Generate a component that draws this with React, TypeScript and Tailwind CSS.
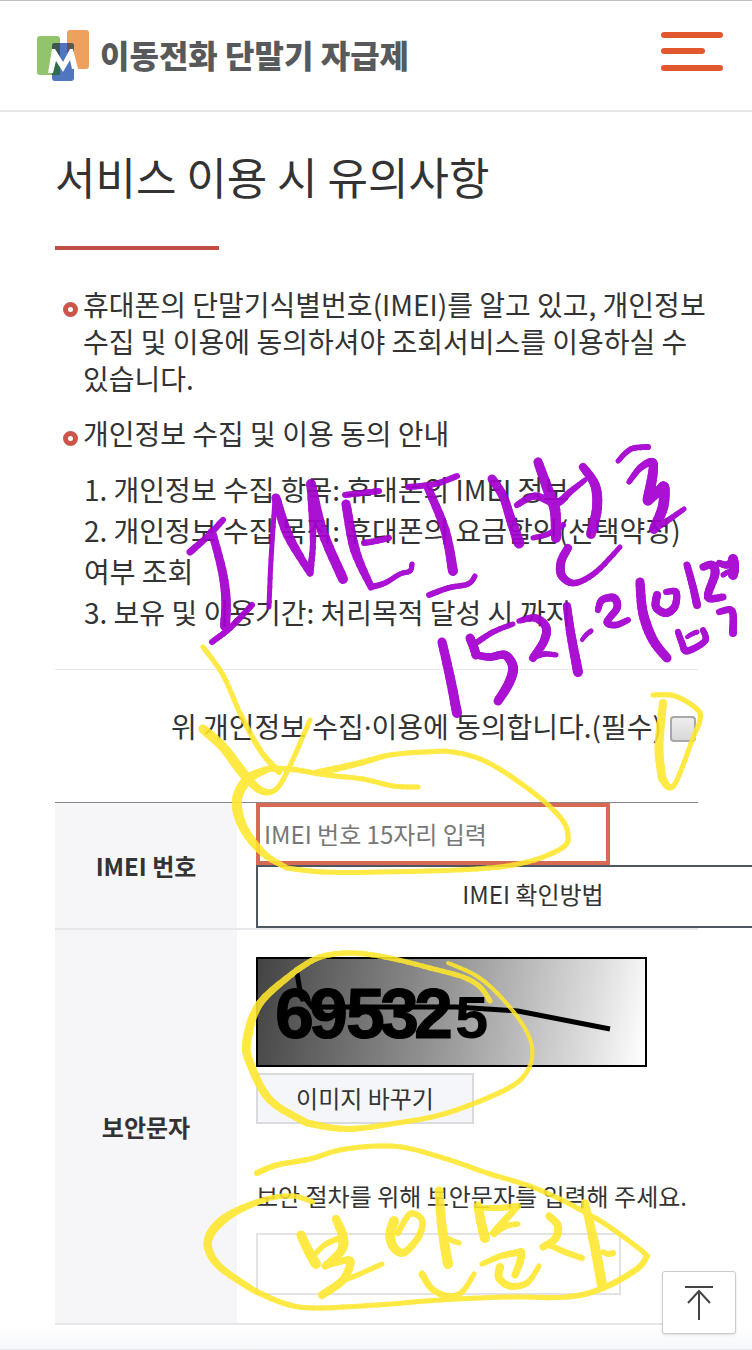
type Stroke = { w: number[]; p: number[] };

const purple: Stroke[] = [
  { w: [7, 6], p: [190, 552, 208, 536, 223, 520] },
  { w: [8, 9, 10], p: [212, 532, 222, 570, 226, 600, 225, 626] },
  { w: [6, 6], p: [212, 642, 230, 628, 252, 605] },
  { w: [5, 5], p: [269, 607, 271, 560, 275, 500] },
  { w: [9, 10, 7], p: [276, 498, 288, 535, 310, 573] },
  { w: [7, 6, 9], p: [310, 573, 313, 540, 311, 484] },
  { w: [10, 10], p: [311, 484, 322, 530, 343, 579] },
  { w: [6, 6], p: [345, 495, 362, 493, 379, 491] },
  { w: [9, 10, 7], p: [346, 504, 355, 550, 371, 587] },
  { w: [6, 5, 5], p: [371, 587, 385, 583, 400, 574, 410, 571, 412, 564] },
  { w: [6, 6], p: [364, 543, 376, 541, 389, 538] },
  { w: [6, 6], p: [408, 487, 435, 484, 457, 476] },
  { w: [8, 9, 10], p: [428, 488, 445, 530, 453, 571] },
  { w: [6, 5], p: [429, 595, 448, 588, 468, 584, 475, 576] },
  { w: [9, 9, 11], p: [492, 479, 503, 496, 511, 520, 519, 543] },
  { w: [9, 11, 10], p: [538, 462, 548, 490, 555, 510, 556, 538] },
  { w: [6, 8, 5], p: [517, 505, 535, 496, 556, 503, 570, 492, 585, 480] },
  { w: [5, 6], p: [533, 538, 548, 534, 563, 525] },
  { w: [8, 10, 10], p: [583, 467, 595, 485, 597, 508, 591, 534] },
  { w: [8, 9, 6, 5], p: [568, 548, 561, 562, 562, 576, 575, 583, 596, 572, 620, 547] },
  { w: [5, 6], p: [618, 461, 631, 449, 648, 447] },
  { w: [5, 8, 11], p: [629, 482, 640, 468, 652, 462, 653, 472, 648, 500] },
  { w: [9, 11, 10], p: [648, 501, 660, 490, 664, 488, 663, 507, 654, 529] },
  { w: [7, 5], p: [654, 529, 667, 521, 684, 509] },
  { w: [9, 10], p: [442, 642, 450, 677, 457, 713] },
  { w: [5, 6], p: [513, 624, 493, 632, 476, 643] },
  { w: [9, 9], p: [470, 638, 474, 648, 476, 655] },
  { w: [7, 8, 10, 9], p: [476, 655, 490, 657, 505, 655, 513, 667, 509, 683, 498, 701] },
  { w: [5, 8, 9, 8], p: [519, 621, 535, 618, 546, 627, 544, 641, 533, 658] },
  { w: [6, 5], p: [533, 657, 545, 654, 556, 655] },
  { w: [8, 10], p: [567, 606, 571, 635, 578, 672] },
  { w: [4, 5], p: [582, 640, 586, 635, 591, 631] },
  { w: [6, 8, 7, 6], p: [598, 610, 602, 600, 614, 598, 617, 608, 607, 622, 616, 625, 628, 620] },
  { w: [9, 10, 9], p: [640, 582, 643, 613, 653, 640, 667, 658] },
  { w: [8, 8, 6], p: [657, 595, 656, 607, 666, 613, 675, 606, 676, 592, 666, 592] },
  { w: [7, 8], p: [687, 565, 693, 587, 697, 605] },
  { w: [6, 7, 6], p: [678, 632, 682, 643, 687, 651, 705, 641, 703, 630] },
  { w: [4, 5], p: [687, 637, 692, 634, 697, 632] },
  { w: [7, 9, 7], p: [703, 567, 712, 565, 715, 574, 708, 597, 723, 597] },
  { w: [6, 8], p: [719, 563, 727, 565, 734, 560] },
  { w: [10, 10], p: [733, 559, 734, 567, 733, 575] },
  { w: [5, 5], p: [723, 575, 728, 572, 735, 570] },
  { w: [6, 8], p: [719, 612, 732, 611, 733, 633] },
];

const yellow: Stroke[] = [
  { w: [5, 5, 6], p: [203, 647, 223, 675, 240, 713, 260, 750, 279, 772] },
  { w: [9, 10, 5, 5], p: [203, 729, 223, 747, 243, 773, 260, 790, 275, 790, 288, 770, 310, 720] },
  { w: [5, 5, 5, 6], p: [418, 787, 393, 786, 363, 779, 327, 775, 290, 769, 268, 769] },
  { w: [6, 10, 10, 8, 5], p: [268, 769, 248, 779, 237, 800, 243, 827, 263, 853, 287, 868] },
  {
    w: [5, 5, 5, 5, 5, 5, 5, 7],
    p: [287, 868, 323, 872, 380, 872, 477, 869, 527, 862, 562, 848, 568, 835, 560, 817, 530, 790, 487, 762, 453, 752, 425, 752, 390, 755, 360, 763, 317, 773],
  },
  { w: [5, 5, 5, 5, 8], p: [653, 695, 675, 696, 697, 709, 700, 720, 693, 738, 677, 780, 669, 787, 662, 778] },
  { w: [8, 9, 8], p: [662, 778, 659, 747, 663, 703] },
  {
    w: [4, 4, 4, 5, 5, 7],
    p: [448, 963, 475, 975, 497, 993, 521, 1022, 532, 1047, 528, 1070, 507, 1089, 447, 1113, 397, 1123, 347, 1129, 307, 1123],
  },
  { w: [7, 8, 9, 6], p: [307, 1123, 270, 1100, 250, 1063, 247, 1040, 260, 1003, 297, 970] },
  { w: [6, 5, 5], p: [297, 970, 320, 957, 350, 953, 385, 957, 430, 968, 463, 977, 480, 987, 490, 1001] },
  {
    w: [6, 5, 5, 5, 5],
    p: [257, 1173, 277, 1165, 310, 1159, 340, 1150, 377, 1146, 407, 1148, 450, 1160, 487, 1173, 540, 1190, 597, 1219, 637, 1247, 647, 1256],
  },
  {
    w: [6, 6, 5, 5, 5, 6],
    p: [647, 1256, 637, 1269, 603, 1288, 567, 1297, 507, 1297, 440, 1300, 377, 1305, 313, 1308, 283, 1303, 253, 1290],
  },
  { w: [6, 8, 9, 5, 5], p: [253, 1290, 220, 1267, 208, 1247, 213, 1230, 233, 1213, 267, 1199, 293, 1196, 313, 1202] },
  { w: [9, 10], p: [301, 1235, 308, 1250, 316, 1264] },
  { w: [5, 6], p: [315, 1254, 326, 1244, 340, 1238] },
  { w: [8, 10, 7], p: [336, 1219, 343, 1237, 341, 1251, 325, 1266] },
  { w: [6, 8, 8], p: [325, 1266, 347, 1260, 350, 1265, 342, 1281, 322, 1295] },
  { w: [5, 5], p: [345, 1280, 362, 1273, 382, 1264] },
  { w: [10, 9, 7, 6, 6], p: [394, 1221, 390, 1236, 395, 1249, 405, 1252, 419, 1236, 422, 1220, 410, 1214, 398, 1233] },
  { w: [9, 10], p: [439, 1191, 442, 1227, 448, 1264] },
  { w: [5, 5], p: [447, 1238, 453, 1241, 459, 1243] },
  { w: [7, 6, 5], p: [422, 1274, 432, 1289, 448, 1296, 462, 1292, 474, 1274] },
  { w: [9, 10], p: [478, 1206, 481, 1222, 485, 1238] },
  { w: [6, 6], p: [480, 1208, 499, 1208, 518, 1206] },
  { w: [6, 8], p: [518, 1206, 505, 1220, 494, 1233] },
  { w: [7, 5], p: [494, 1233, 506, 1226, 518, 1224] },
  { w: [5, 7], p: [482, 1264, 501, 1256, 521, 1252] },
  { w: [8, 7], p: [521, 1252, 520, 1262, 515, 1275] },
  { w: [8, 7, 5], p: [500, 1267, 499, 1278, 510, 1286, 527, 1283, 539, 1266] },
  { w: [7, 8, 7], p: [549, 1216, 558, 1226, 555, 1239, 543, 1247] },
  { w: [6, 6], p: [547, 1244, 565, 1252, 582, 1258] },
  { w: [7, 10, 10], p: [585, 1203, 595, 1247, 602, 1285] },
  { w: [5, 6], p: [603, 1252, 608, 1254, 613, 1253] },
];

type Seg = { d: string; w: number };

/* Splits a freehand stroke into short smooth pieces whose width changes along the way. */
function segments({ w, p }: Stroke): Seg[] {
  const n = p.length / 2;
  const pt = (i: number) => {
    const k = Math.max(0, Math.min(n - 1, i));
    return [p[k * 2], p[k * 2 + 1]];
  };
  const spline = (a: number, b: number, c: number, d: number, t: number) =>
    0.5 * (2 * b + (c - a) * t + (2 * a - 5 * b + 4 * c - d) * t * t + (3 * b - a - 3 * c + d) * t * t * t);
  const steps = 6;
  const out: Seg[] = [];
  let last = pt(0);
  for (let i = 0; i < n - 1; i++) {
    const [a, b, c, d] = [pt(i - 1), pt(i), pt(i + 1), pt(i + 2)];
    for (let s = 1; s <= steps; s++) {
      const t = s / steps;
      const next = [spline(a[0], b[0], c[0], d[0], t), spline(a[1], b[1], c[1], d[1], t)];
      const pos = ((i + t) / (n - 1)) * (w.length - 1);
      const k = Math.min(w.length - 2, Math.floor(pos));
      const width = w[k] + (w[k + 1] - w[k]) * (pos - k);
      out.push({
        d: `M${last[0].toFixed(1)} ${last[1].toFixed(1)}L${next[0].toFixed(1)} ${next[1].toFixed(1)}`,
        w: width,
      });
      last = next;
    }
  }
  return out;
}

function Ink({ strokes, color, opacity }: { strokes: Stroke[]; color: string; opacity: number }) {
  return (
    <g fill="none" stroke={color} strokeLinecap="round" opacity={opacity}>
      {strokes.flatMap((s, i) => segments(s).map((g, j) => <path key={`${i}-${j}`} d={g.d} strokeWidth={g.w} />))}
    </g>
  );
}

function Header() {
  return (
    <header className="flex h-28 items-center justify-between border-t border-b-2 border-t-[#bdbdbd] border-b-[#e6e6e6] pr-7 pl-9">
      <a href="#home" className="flex items-center gap-[10px] text-[#58595b]">
        <svg viewBox="0 0 54 54" className="size-[54px]" aria-hidden="true">
          <rect x="1" y="7" width="23" height="39" rx="3" fill="#92c56b" />
          <rect x="31" y="1" width="22" height="39" rx="3" fill="#eda15c" />
          <rect x="16" y="14" width="22" height="38" rx="3" fill="#4f77bd" />
          <path d="M16 30h8v16h-8z" fill="#2e6b50" />
          <path d="M16 17q0-3 3-3h5v14l-5-8-3 8z" fill="#3c5650" />
          <path d="M31 14h4q3 0 3 3v10l-3-7-4 7z" fill="#5c574f" />
          <path d="M12 44 16 20H19L27 33 34 20H37L42 40H36L34 31 27 43 20 32 17 44z" fill="#fff" />
        </svg>
        <span className="pb-1 text-[32px] leading-10 font-black">이동전화 단말기 자급제</span>
      </a>
      <button type="button" aria-label="메뉴" className="mb-2">
        <svg viewBox="0 0 64 42" className="h-[42px] w-16" stroke="#e2582e" strokeWidth="6" strokeLinecap="round">
          <path d="M4 4H60M4 20H42M4 37H60" />
        </svg>
      </button>
    </header>
  );
}

function Bullet() {
  return <span className="mt-4 mr-[5px] size-[15px] shrink-0 rounded-full border-[5px] border-[#cb544b] bg-white" />;
}

function Captcha() {
  return (
    <svg viewBox="0 0 391 110" className="block h-[110px] w-[391px]" role="img" aria-label="695325">
      <defs>
        <linearGradient id="grey" gradientUnits="userSpaceOnUse" x1="0" y1="20" x2="391" y2="90">
          <stop offset="0" stopColor="#444" />
          <stop offset="0.5" stopColor="#999" />
          <stop offset="0.85" stopColor="#ddd" />
          <stop offset="1" stopColor="#fff" />
        </linearGradient>
      </defs>
      <rect x="1" y="1" width="389" height="108" fill="url(#grey)" stroke="#000" strokeWidth="2" />
      <g fontFamily="Liberation Sans, sans-serif" fontWeight="700" fill="#000">
        <text x="19 53 90 124 158" y="81" fontSize="70" stroke="#000" strokeWidth="1">
          69532
        </text>
        <text x="199" y="81" fontSize="60">
          5
        </text>
      </g>
      <path d="M41 16 44 34 56 50H200L262 54 354 72" fill="none" stroke="#000" strokeWidth="5" />
    </svg>
  );
}

export default function App() {
  return (
    <div className="relative overflow-hidden bg-white font-['Noto_Sans_CJK_KR',sans-serif] text-[#333]">
      <Header />
      <main className="pr-[54px] pl-[55px]">
        <h1 className="pt-[34px] text-[44px] leading-[60px]">서비스 이용 시 유의사항</h1>
        <div className="mt-10 h-1 w-[164px] bg-[#c14e45]" />

        <ul className="mt-9 pl-2 text-[28px] leading-[37px] break-keep">
          <li className="flex">
            <Bullet />
            <p className="-mr-2">휴대폰의 단말기식별번호(IMEI)를 알고 있고, 개인정보 수집 및 이용에 동의하셔야 조회서비스를 이용하실 수 있습니다.</p>
          </li>
          <li className="mt-[18px] flex">
            <Bullet />
            <p>개인정보 수집 및 이용 동의 안내</p>
          </li>
        </ul>
        <div className="mt-[17px] pl-[29px] text-[28px] leading-[41px] break-keep">
          <p>1. 개인정보 수집 항목: 휴대폰의 IMEI 정보</p>
          <p>2. 개인정보 수집 목적: 휴대폰의 요금할인(선택약정) 여부 조회</p>
          <p>3. 보유 및 이용기간: 처리목적 달성 시 까지</p>
        </div>

        <div className="mt-9 flex items-center justify-end gap-2 border-t border-[#e8e8e8] pt-9 pb-[55px] text-[28px] leading-10">
          <label htmlFor="agree">
            위 개인정보 수집<span className="font-['Noto_Sans',sans-serif]">·</span>이용에 동의합니다.(필수)
          </label>
          <input
            id="agree"
            type="checkbox"
            className="mt-1 mr-[2px] size-[26px] appearance-none rounded-[4px] border-2 border-[#a8a8a8] bg-linear-to-b from-[#eee] to-[#d8d8d8]"
          />
        </div>

        <table className="w-full table-fixed border-collapse text-2xl">
          <colgroup>
            <col className="w-[182px]" />
            <col />
          </colgroup>
          <tbody>
            <tr className="border-t border-b-2 border-t-[#888] border-b-[#e6e7ea]">
              <th scope="row" className="bg-[#f6f6f9] font-bold">
                <label htmlFor="imei">IMEI 번호</label>
              </th>
              <td className="p-0 pl-[19px]">
                <input
                  id="imei"
                  type="text"
                  placeholder="IMEI 번호 15자리 입력"
                  className="block h-[62px] w-[354px] border-4 border-[#d86a55] px-1 pb-[2px] placeholder:text-[#777]"
                />
                <button type="button" className="block h-[63px] w-[554px] border-2 border-[#4e5760] bg-white pb-[6px]">
                  IMEI 확인방법
                </button>
              </td>
            </tr>
            <tr className="border-b-2 border-[#e6e7ea]">
              <th scope="row" className="bg-[#f6f6f9] font-bold">
                <label htmlFor="captcha">보안문자</label>
              </th>
              <td className="p-0 pt-[27px] pb-7 pl-[19px]">
                <Captcha />
                <button type="button" className="mt-[6px] block h-[51px] w-[218px] border-2 border-[#d9dadc] bg-[#f4f6f9] pb-[2px]">
                  이미지 바꾸기
                </button>
                <p className="mt-[54px] leading-9">보안 절차를 위해 보안문자를 입력해 주세요.</p>
                <input id="captcha" type="text" className="mt-[19px] block h-[62px] w-[365px] border-2 border-[#e3e3e5] px-2" />
              </td>
            </tr>
          </tbody>
        </table>
      </main>
      <footer className="h-[26px] border-b-2 border-[#e6e8eb] bg-linear-to-b from-white to-[#f7f8fb]" />

      <svg viewBox="0 0 752 1350" className="pointer-events-none absolute top-0 left-0 h-[1350px] w-[752px]" aria-hidden="true">
        <Ink strokes={purple} color="#a400d0" opacity={0.93} />
        <Ink strokes={yellow} color="#ffe72c" opacity={0.88} />
      </svg>

      <a
        href="#top"
        aria-label="맨 위로"
        className="absolute right-4 bottom-[17px] flex h-[63px] w-[74px] items-center justify-center rounded-[3px] border border-[#ccc] bg-white shadow-sm"
      >
        <svg viewBox="0 0 30 36" className="h-9 w-[30px]" fill="none" stroke="#444" strokeWidth="2">
          <path d="M1 2H29M15 35V6M4 18 15 6 26 18" />
        </svg>
      </a>
    </div>
  );
}
